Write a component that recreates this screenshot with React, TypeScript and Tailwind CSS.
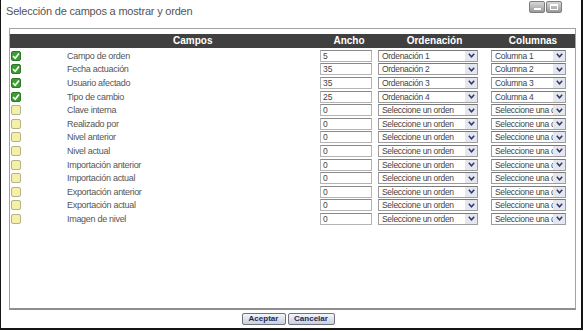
const font = { fontFamily: '"Liberation Sans", Arial, sans-serif' }

type Row = { label: string; checked: boolean; width: string; order: string; column: string }

const rows: Row[] = [
  { label: 'Campo de orden', checked: true, width: '5', order: 'Ordenación 1', column: 'Columna 1' },
  { label: 'Fecha actuación', checked: true, width: '35', order: 'Ordenación 2', column: 'Columna 2' },
  { label: 'Usuario afectado', checked: true, width: '35', order: 'Ordenación 3', column: 'Columna 3' },
  { label: 'Tipo de cambio', checked: true, width: '25', order: 'Ordenación 4', column: 'Columna 4' },
  ...[
    'Clave interna',
    'Realizado por',
    'Nivel anterior',
    'Nivel actual',
    'Importación anterior',
    'Importación actual',
    'Exportación anterior',
    'Exportación actual',
    'Imagen de nivel',
  ].map((label) => ({ label, checked: false, width: '0', order: 'Seleccione un orden', column: 'Seleccione una columna' })),
]

function CheckBox({ checked }: { checked: boolean }) {
  if (checked) {
    return (
      <div className="w-[10px] h-[10px] rounded-[2px] bg-[#3c9e32] border border-[#2d7a25] flex items-center justify-center">
        <svg width="8" height="8" viewBox="0 0 8 8">
          <path d="M1 4 L3.2 6.2 L7 1.5" fill="none" stroke="#ffffff" strokeWidth="1.6" />
        </svg>
      </div>
    )
  }
  return <div className="w-[10px] h-[10px] rounded-[2px] bg-[#f4f0a6] border border-[#b5b38a]" />
}

function Select({ value, w }: { value: string; w: string }) {
  return (
    <div className={`${w} h-[12px] flex bg-white border border-[#9c9c9c] border-t-[#7a7a7a]`}>
      <div className="flex-1 min-w-0 overflow-hidden whitespace-nowrap pl-[3px] text-[8.5px] leading-[10px] tracking-[-0.3px] text-[#444]">
        {value}
      </div>
      <div className="w-[12px] h-full bg-[#e6e6ee] flex items-center justify-center shrink-0">
        <svg width="7" height="5" viewBox="0 0 7 5">
          <path d="M0.8 0.8 L3.5 3.8 L6.2 0.8" fill="none" stroke="#2b3a6b" strokeWidth="1.5" />
        </svg>
      </div>
    </div>
  )
}

function WinButton({ kind }: { kind: 'min' | 'max' }) {
  return (
    <div className="w-[16px] h-[12px] rounded-[2px] border border-[#7d7d7d] bg-gradient-to-b from-[#d8d8d8] to-[#9a9a9a] flex items-center justify-center">
      {kind === 'min' ? (
        <div className="w-[7px] h-[2px] bg-white mt-[3px]" />
      ) : (
        <div className="w-[8px] h-[6px] border border-white border-t-2" />
      )}
    </div>
  )
}

export default function App() {
  return (
    <div className="w-[584px] h-[331px] bg-white overflow-hidden" style={font}>
      <div className="relative w-[583px] h-[330px] border-l border-r-2 border-b-2 border-[#151515] flex flex-col">
        {/* title bar */}
        <div className="h-[28px] pl-[5px] pt-[4px] text-[11px] leading-[14px] tracking-[-0.2px] text-[#555]">
          Selección de campos a mostrar y orden
        </div>
        <div className="absolute top-[1px] right-[19px] flex gap-[1px]">
          <WinButton kind="min" />
          <WinButton kind="max" />
        </div>

        {/* panel */}
        <div className="ml-[8px] w-[567px] h-[282px] border border-b-2 border-[#a3a3a3] border-b-[#8e8e8e] pt-[5px]">
          <div className="h-[14px] bg-[#404040] flex items-center text-white font-bold text-[10px] leading-[14px] whitespace-nowrap">
            <div className="w-[310px] pl-[163px]">Campos</div>
            <div className="w-[58px] text-center">Ancho</div>
            <div className="w-[113px] text-center">Ordenación</div>
            <div className="w-[84px] text-center">Columnas</div>
          </div>
          <div className="pt-[1px]">
            {rows.map((r) => (
              <div key={r.label} className="h-[13.6px] flex items-center">
                <div className="w-[57px] pl-[1px]">
                  <CheckBox checked={r.checked} />
                </div>
                <div className="w-[253px] text-[9px] leading-[12px] tracking-[-0.3px] text-[#555] whitespace-nowrap">
                  {r.label}
                </div>
                <div className="w-[52px] h-[12px] bg-white border border-[#b4b4b4] border-t-[#8a8a8a] pl-[2px] text-[8.5px] leading-[10px] text-[#444]">
                  {r.width}
                </div>
                <div className="w-[6px]" />
                <Select value={r.order} w="w-[100px]" />
                <div className="w-[13px]" />
                <Select value={r.column} w="w-[75px]" />
              </div>
            ))}
          </div>
        </div>

        {/* buttons */}
        <div className="flex justify-center gap-[2px] mt-[3px] pr-[6px]">
          <button className="w-[44px] h-[12px] rounded-[2px] border border-[#6f7480] bg-gradient-to-b from-[#f4f6fa] to-[#c9cfdc] text-[8px] leading-[10px] font-bold text-[#1e2a55]">
            Aceptar
          </button>
          <button className="w-[47px] h-[12px] rounded-[2px] border border-[#6f7480] bg-gradient-to-b from-[#f4f6fa] to-[#c9cfdc] text-[8px] leading-[10px] font-bold text-[#1e2a55]">
            Cancelar
          </button>
        </div>
      </div>
    </div>
  )
}
